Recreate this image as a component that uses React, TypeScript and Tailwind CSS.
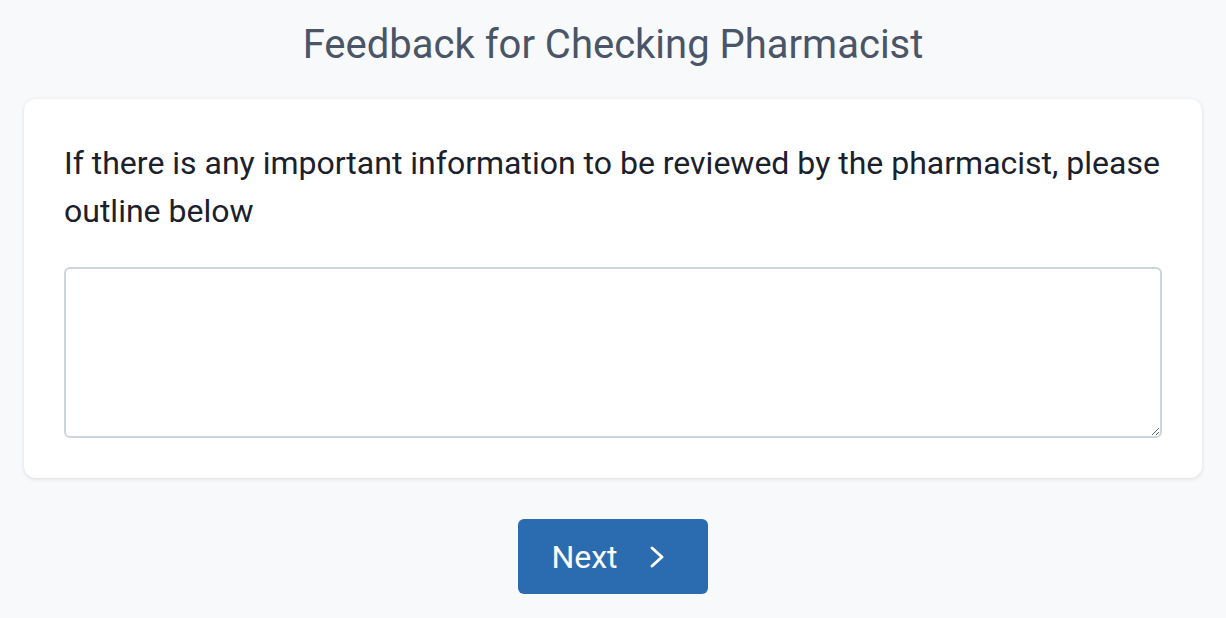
import React, { useState } from 'react';

const ChevronRight = () => (
  <svg width="18" height="24" viewBox="0 0 18 24" fill="none" className="ml-[31px]">
    <path d="M3 3 L13 12 L3 21" stroke="white" strokeWidth="3" strokeLinecap="round" strokeLinejoin="round" />
  </svg>
);

const App = () => {
  const [notes, setNotes] = useState('');

  return (
    <div className="min-h-screen bg-[#f8f9fb] px-6 pt-[21px] font-['Roboto',sans-serif]">
      <h1 className="text-center text-[40px] leading-[48px] text-[#4a5568]">
        Feedback for Checking Pharmacist
      </h1>

      <div className="mt-[30px] rounded-xl bg-white p-10 shadow-[0_1px_4px_rgba(0,0,0,0.12)]">
        <p className="text-[32px] leading-[48px] text-[#1a202c]">
          If there is any important information to be reviewed by the pharmacist, please outline below
        </p>
        <textarea
          value={notes}
          onChange={(e) => setNotes(e.target.value)}
          className="mt-8 block h-[171px] w-full rounded-md border-2 border-[#cbd5e0] p-3 text-[20px] outline-none"
        />
      </div>

      <div className="mt-[41px] flex justify-center">
        <button className="flex h-[75px] w-[190px] items-center justify-center rounded-md bg-[#2b6cb0] pr-2 text-[32px] text-white">
          Next
          <ChevronRight />
        </button>
      </div>
    </div>
  );
};

export default App;
